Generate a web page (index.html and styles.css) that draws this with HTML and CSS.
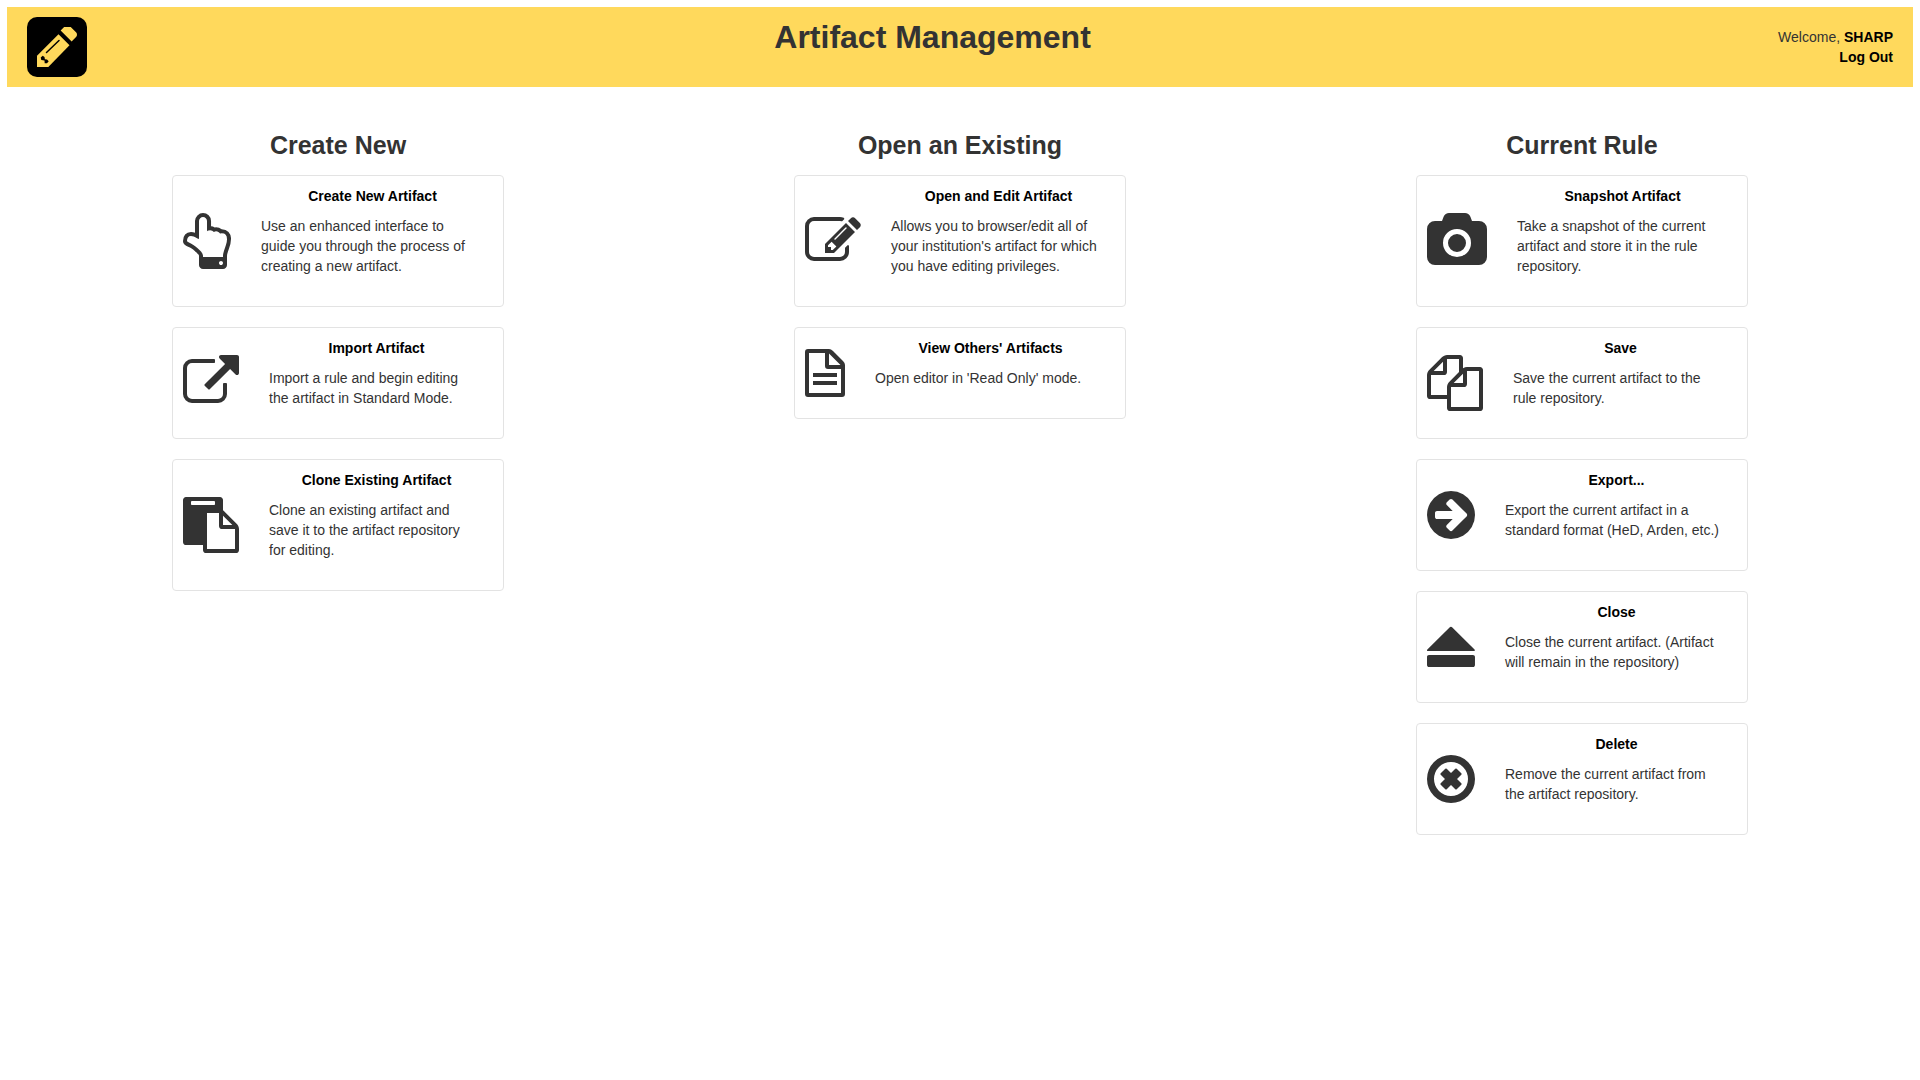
FILE: index.html
```html
<!DOCTYPE html>
<html lang="en">
<head>
<meta charset="utf-8">
<title>Artifact Management</title>
<link rel="stylesheet" href="styles.css">
</head>
<body>
<header class="banner">
  <svg class="logo" viewBox="0 0 60 60" aria-hidden="true">
    <rect width="60" height="60" rx="10"/>
    <path class="logo-pencil" d="M10 50V38.700L31.500 17.300L42.500 28.300L21.300 50Z"/>
    <svg x="10" y="10" width="40" height="40" viewBox="128 149 1515 1515"><path class="logo-pencil" d="M1643 440q0 53-37 90l-166 166-416-416 166-165q36-38 90-38 53 0 91 38l235 234q37 39 37 91z"/></svg>
    <path class="logo-groove" d="M19.500 35.500L32 23.500"/>
    <path d="M13.700 40.500L15.700 38.700L17.500 40L17.900 42.200L20 42.500L21.700 44.300L20 46.300H17.700L17.500 43.600L14.300 43Z"/>
  </svg>
  <h1 class="banner-title">Artifact Management</h1>
  <div class="account">
    Welcome, <a class="link" href="#account">SHARP</a><br>
    <a class="link" href="#logout">Log Out</a>
  </div>
</header>

<main class="columns">
  <section class="column">
    <h2 class="column-title">Create New</h2>
    <article class="card">
      <svg class="icon icon-48" viewBox="128 0 1536 1792" aria-hidden="true"><path d="M1408 1600q0-26-19-45t-45-19-45 19-19 45 19 45 45 19 45-19 19-45zm128-764q0-189-167-189-26 0-56 5-16-30-52.500-47.500t-73.500-17.500-69 18q-50-53-119-53-25 0-55.500 10t-47.500 25v-331q0-52-38-90t-90-38q-51 0-89.500 39t-38.500 89v576q-20 0-48.500-15t-55-33-68-33-84.500-15q-67 0-97.500 44.500t-30.500 115.500q0 24 139 90 44 24 65 37 64 40 145 112 81 71 106 101 57 69 57 140v32h640v-32q0-72 32-167t64-193.500 32-179.500zm128-5q0 133-69 322-59 164-59 223v288q0 53-37.500 90.500t-90.500 37.500h-640q-53 0-90.500-37.500t-37.500-90.500v-288q0-10-4.500-21.500t-14-23.500-18-22.500-22.500-24-21.500-20.500-21.500-19-17-14q-74-65-129-100-21-13-62-33t-72-37-63-40.500-49.500-55-17.500-69.500q0-125 67-206.500t189-81.500q68 0 128 22v-374q0-104 77-180t179-76q105 0 181 75.500t76 180.500v169q62 4 119 37 21-3 43-3 101 0 178 60 139-1 219.500 85t80.500 227z"/></svg>
      <div class="card-body">
        <a class="link" href="#create">Create New Artifact</a>
        <p class="card-text">Use an enhanced interface to guide you through the process of creating a new artifact.</p>
      </div>
    </article>
    <article class="card">
      <svg class="icon icon-56" viewBox="0 0 1792 1792" aria-hidden="true"><path d="M1408 928v320q0 119-84.500 203.500t-203.500 84.500h-832q-119 0-203.500-84.500t-84.500-203.500v-832q0-119 84.500-203.500t203.500-84.500h704q14 0 23 9t9 23v64q0 14-9 23t-23 9h-704q-66 0-113 47t-47 113v832q0 66 47 113t113 47h832q66 0 113-47t47-113v-320q0-14 9-23t23-9h64q14 0 23 9t9 23zm384-864v512q0 26-19 45t-45 19-45-19l-176-176-652 652q-10 10-23 10t-23-10l-114-114q-10-10-10-23t10-23l652-652-176-176q-19-19-19-45t19-45 45-19h512q26 0 45 19t19 45z"/></svg>
      <div class="card-body">
        <a class="link" href="#import">Import Artifact</a>
        <p class="card-text">Import a rule and begin editing the artifact in Standard Mode.</p>
      </div>
    </article>
    <article class="card">
      <svg class="icon icon-56" viewBox="0 0 1792 1792" aria-hidden="true"><path d="M768 1664h896v-640h-416q-40 0-68-28t-28-68v-416h-384v1152zm256-1440v-64q0-13-9.500-22.500t-22.500-9.500h-704q-13 0-22.500 9.500t-9.500 22.500v64q0 13 9.500 22.500t22.500 9.500h704q13 0 22.500-9.500t9.500-22.500zm256 672h299l-299-299v299zm512 128v672q0 40-28 68t-68 28h-960q-40 0-68-28t-28-68v-160h-544q-40 0-68-28t-28-68v-1344q0-40 28-68t68-28h1088q40 0 68 28t28 68v328q21 13 36 28l408 408q28 28 48 76t20 88z"/></svg>
      <div class="card-body">
        <a class="link" href="#clone">Clone Existing Artifact</a>
        <p class="card-text">Clone an existing artifact and save it to the artifact repository for editing.</p>
      </div>
    </article>
  </section>

  <section class="column">
    <h2 class="column-title">Open an Existing</h2>
    <article class="card">
      <svg class="icon icon-56" viewBox="0 0 1792 1792" aria-hidden="true"><path d="M888 1184l116-116-152-152-116 116v56h96v96h56zm440-720q-16-16-33 1l-350 350q-17 17-1 33t33-1l350-350q17-17 1-33zm80 594v190q0 119-84.500 203.500t-203.500 84.500h-832q-119 0-203.500-84.500t-84.500-203.500v-832q0-119 84.500-203.500t203.500-84.500h832q63 0 117 25 15 7 18 23 3 17-9 29l-49 49q-14 14-32 8-23-6-45-6h-832q-66 0-113 47t-47 113v832q0 66 47 113t113 47h832q66 0 113-47t47-113v-126q0-13 9-22l64-64q15-15 35-7t20 29zm-96-738l288 288-672 672h-288v-288zm444 132l-92 92-288-288 92-92q28-28 68-28t68 28l152 152q28 28 28 68t-28 68z"/></svg>
      <div class="card-body">
        <a class="link" href="#open">Open and Edit Artifact</a>
        <p class="card-text">Allows you to browser/edit all of your institution's artifact for which you have editing privileges.</p>
      </div>
    </article>
    <article class="card">
      <svg class="icon icon-40" viewBox="0 0 40 56" aria-hidden="true"><path fill-rule="evenodd" d="M3 4H24Q26 4 28 6L38 16Q40 18 40 20V49Q40 52 37 52H3Q0 52 0 49V7Q0 4 3 4ZM4 8V48H36V24H23Q20 24 20 21V8ZM24 8.500V20H35.500ZM8 28H32V32H8ZM8 36H32V40H8Z"/></svg>
      <div class="card-body">
        <a class="link" href="#view">View Others' Artifacts</a>
        <p class="card-text">Open editor in 'Read Only' mode.</p>
      </div>
    </article>
  </section>

  <section class="column">
    <h2 class="column-title">Current Rule</h2>
    <article class="card">
      <svg class="icon icon-60" viewBox="0 0 1920 1792" aria-hidden="true"><path d="M960 672q119 0 203.500 84.500t84.500 203.500-84.500 203.500-203.500 84.500-203.500-84.500-84.500-203.500 84.500-203.500 203.500-84.500zm704-416q106 0 181 75t75 181v896q0 106-75 181t-181 75h-1408q-106 0-181-75t-75-181v-896q0-106 75-181t181-75h224l51-136q19-49 69.500-84.500t103.500-35.500h512q53 0 103.500 35.500t69.500 84.500l51 136h224zm-704 1152q185 0 316.500-131.500t131.500-316.500-131.500-316.500-316.500-131.500-316.500 131.500-131.500 316.500 131.500 316.500 316.500 131.500z"/></svg>
      <div class="card-body">
        <a class="link" href="#snapshot">Snapshot Artifact</a>
        <p class="card-text">Take a snapshot of the current artifact and store it in the rule repository.</p>
      </div>
    </article>
    <article class="card">
      <svg class="icon icon-56" viewBox="0 0 1792 1792" aria-hidden="true"><path d="M1696 384q40 0 68 28t28 68v1216q0 40-28 68t-68 28h-960q-40 0-68-28t-28-68v-288h-544q-40 0-68-28t-28-68v-672q0-40 20-88t48-76l408-408q28-28 76-48t88-20h416q40 0 68 28t28 68v328q68-40 128-40h416zm-544 213l-299 299h299v-299zm-640-384l-299 299h299v-299zm196 647l316-316v-416h-384v416q0 40-28 68t-68 28h-416v640h512v-256q0-40 20-88t48-76zm956 804v-1152h-384v416q0 40-28 68t-68 28h-416v640h896z"/></svg>
      <div class="card-body">
        <a class="link" href="#save">Save</a>
        <p class="card-text">Save the current artifact to the rule repository.</p>
      </div>
    </article>
    <article class="card">
      <svg class="icon icon-48" viewBox="128 0 1536 1792" aria-hidden="true"><path d="M1413 896q0-27-18-45l-91-91-362-362q-18-18-45-18t-45 18l-91 91q-18 18-18 45t18 45l189 189h-502q-26 0-45 19t-19 45v128q0 26 19 45t45 19h502l-189 189q-19 19-19 45t19 45l91 91q18 18 45 18t45-18l362-362 91-91q18-18 18-45zm251 0q0 209-103 385.500t-279.500 279.500-385.500 103-385.500-103-279.500-279.500-103-385.500 103-385.500 279.500-279.500 385.500-103 385.500 103 279.500 279.500 103 385.500z"/></svg>
      <div class="card-body">
        <a class="link" href="#export">Export...</a>
        <p class="card-text">Export the current artifact in a standard format (HeD, Arden, etc.)</p>
      </div>
    </article>
    <article class="card">
      <svg class="icon icon-48" viewBox="128 0 1536 1792" aria-hidden="true"><path d="M139 979l710-710q19-19 45-19t45 19l710 710q19 19 13 32t-32 13h-1472q-26 0-32-13t13-32zM1599 1536h-1408q-26 0-45-19t-19-45v-256q0-26 19-45t45-19h1408q26 0 45 19t19 45v256q0 26-19 45t-45 19z"/></svg>
      <div class="card-body">
        <a class="link" href="#close">Close</a>
        <p class="card-text">Close the current artifact. (Artifact will remain in the repository)</p>
      </div>
    </article>
    <article class="card">
      <svg class="icon icon-48" viewBox="128 0 1536 1792" aria-hidden="true"><path fill-rule="evenodd" d="M1225 1079l-146 146q-10 10-23 10t-23-10l-137-137-137 137q-10 10-23 10t-23-10l-146-146q-10-10-10-23t10-23l137-137-137-137q-10-10-10-23t10-23l146-146q10-10 23-10t23 10l137 137 137-137q10-10 23-10t23 10l146 146q10 10 10 23t-10 23l-137 137 137 137q10 10 10 23t-10 23zM128 896a768 768 0 1 1 1536 0a768 768 0 1 1-1536 0zM352 896a544 544 0 1 0 1088 0a544 544 0 1 0-1088 0z"/></svg>
      <div class="card-body">
        <a class="link" href="#delete">Delete</a>
        <p class="card-text">Remove the current artifact from the artifact repository.</p>
      </div>
    </article>
  </section>
</main>
</body>
</html>
```
FILE: styles.css
```css
* {
  box-sizing: border-box;
}

body {
  margin: 7px;
  background: #fff;
  color: #333;
  font: 14px/20px "Liberation Sans", Arial, sans-serif;
}

.banner {
  display: flex;
  align-items: center;
  padding: 10px 20px;
  background: #ffd95c;
}

.logo {
  flex: none;
  width: 60px;
  height: 60px;
}

.logo-pencil {
  fill: #ffd95c;
}

.logo-groove {
  stroke: #000;
  stroke-width: 1.5;
  stroke-linecap: round;
}

.banner-title {
  flex: 1;
  align-self: flex-start;
  margin: 0;
  font-size: 32px;
  line-height: 40px;
  text-align: center;
}

.account {
  text-align: right;
}

.link {
  color: #000;
  font-weight: bold;
  text-decoration: none;
}

.link:hover {
  text-decoration: underline;
}

.columns {
  display: grid;
  grid-template-columns: repeat(3, 1fr);
  padding: 38px 20px;
}

.column {
  display: flex;
  flex-direction: column;
  align-items: center;
}

.column-title {
  margin: 0 0 10px;
  font-size: 25px;
  line-height: 40px;
}

.card {
  display: flex;
  align-items: center;
  gap: 20px;
  width: 332px;
  max-width: 100%;
  margin-bottom: 20px;
  padding: 0 9px 0 10px;
  border: 1px solid #e3e3e3;
  border-radius: 4px;
}

.icon {
  flex: none;
  height: 56px;
  fill: #333;
}

.icon-40 {
  width: 40px;
}

.icon-48 {
  width: 48px;
}

.icon-56 {
  width: 56px;
}

.icon-60 {
  width: 60px;
}

.card-body {
  flex: 1;
  padding: 10px 0 20px;
  text-align: center;
}

.card-text {
  margin: 10px 16px 10px 10px;
  text-align: left;
}
```
